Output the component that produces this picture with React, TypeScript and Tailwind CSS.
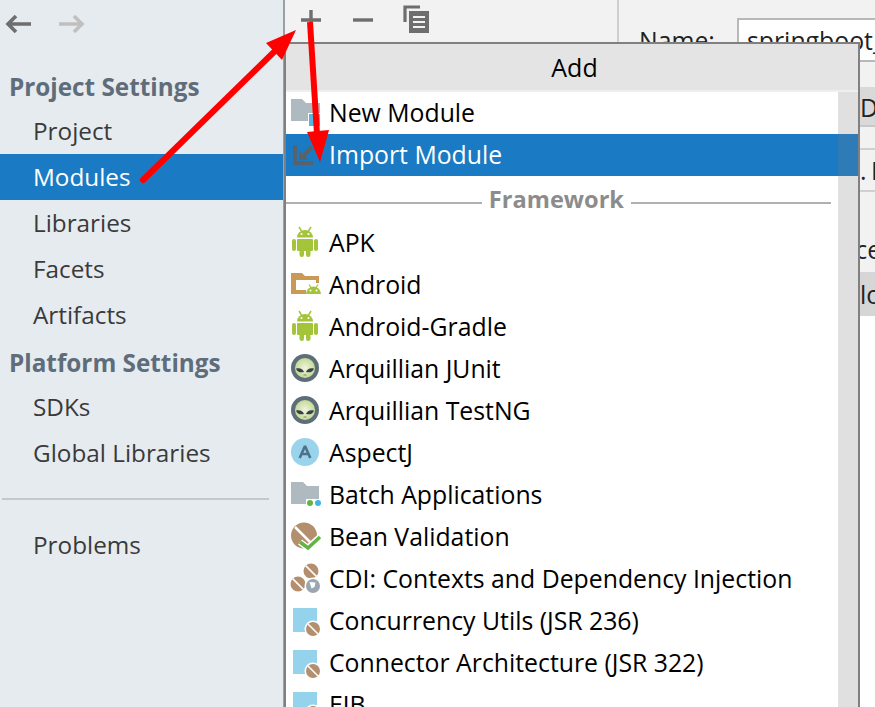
const font = "font-['Open_Sans','Noto_Sans',sans-serif]";

function Icon({ children }: { children: React.ReactNode }) {
  return (
    <svg width="30" height="30" viewBox="0 0 30 30" className="shrink-0 overflow-visible">
      {children}
    </svg>
  );
}

function NewModuleIcon() {
  return (
    <Icon>
      <path d="M0 1h11l4 4h14v18H0z" fill="#aeb9c0" />
      <rect x="17" y="15" width="13" height="15" fill="#fff" />
      <rect x="18" y="16" width="11" height="12" fill="#56b5dc" />
    </Icon>
  );
}

function ImportIcon() {
  return (
    <Icon>
      <path d="M4 5v18h18.500" fill="none" stroke="#58626a" strokeWidth="4" />
      <path d="M11 17L21 7" stroke="#58626a" strokeWidth="4" />
      <path d="M8 10v10h10z" fill="#58626a" />
    </Icon>
  );
}

function AndroidIcon() {
  return (
    <Icon>
      <g fill="#a4c439">
        <path d="M6 9.500a8 7.500 0 0 1 16 0z" />
        <path d="M8 -1l2.500 4M20 -1l-2.500 4" stroke="#a4c439" strokeWidth="1.500" />
        <rect x="6" y="11" width="16" height="12" rx="1" />
        <rect x="1" y="11" width="4" height="12" rx="2" />
        <rect x="23" y="11" width="4" height="12" rx="2" />
        <rect x="8.500" y="20" width="4.500" height="9" rx="2.200" />
        <rect x="15" y="20" width="4.500" height="9" rx="2.200" />
      </g>
      <circle cx="10.500" cy="6" r="1.100" fill="#fff" />
      <circle cx="17.500" cy="6" r="1.100" fill="#fff" />
    </Icon>
  );
}

function AndroidFolderIcon() {
  return (
    <Icon>
      <path d="M0 3h11l3 3h14v7h-3v-3H5v10h10v4H0z" fill="#c99a55" />
      <path d="M15 24a7.500 7.500 0 0 1 15 0z" fill="#a4c439" />
      <path d="M18 14.500l2 3M27 14.500l-2 3" stroke="#a4c439" strokeWidth="1.200" />
      <circle cx="19.500" cy="20.500" r="1" fill="#fff" />
      <circle cx="25.500" cy="20.500" r="1" fill="#fff" />
    </Icon>
  );
}

function AlienIcon() {
  return (
    <Icon>
      <defs>
        <radialGradient id="alienFace">
          <stop offset="0%" stopColor="#f0f5e0" />
          <stop offset="100%" stopColor="#c5d996" />
        </radialGradient>
      </defs>
      <circle cx="14" cy="14" r="14" fill="#5c6f78" />
      <circle cx="14" cy="14" r="10" fill="url(#alienFace)" />
      <path d="M5 14.500c3.500-1 7 0 8 3.500-3.500 1-7 0-8-3.500zM23 14.500c-3.500-1-7 0-8 3.500 3.500 1 7 0 8-3.500z" fill="#37434a" />
      <path d="M12.500 21h3" stroke="#7d8a70" strokeWidth="1" />
    </Icon>
  );
}

function AspectIcon() {
  return (
    <Icon>
      <circle cx="14" cy="14" r="14" fill="#99d4ec" />
      <path d="M8.700 20L14 8 19.300 20M10.500 16h7" fill="none" stroke="#4d7189" strokeWidth="2.600" strokeLinejoin="bevel" />
    </Icon>
  );
}

function BatchIcon() {
  return (
    <Icon>
      <path d="M0 2h12l4 4h12v13h-13v5H0z" fill="#aeb9c0" />
      <circle cx="19" cy="23" r="3" fill="#62b543" />
      <circle cx="27" cy="23" r="3" fill="#40b6e0" />
    </Icon>
  );
}

function Bean({ cx, cy, r }: { cx: number; cy: number; r: number }) {
  const d = r * 0.72;
  return (
    <g>
      <circle cx={cx} cy={cy} r={r} fill="#b48f6e" />
      <path d={`M${cx - d} ${cy - d}L${cx + d} ${cy + d}`} stroke="#fff" strokeWidth="1.600" />
    </g>
  );
}

function BeanValidationIcon() {
  return (
    <Icon>
      <circle cx="13" cy="13.500" r="13" fill="#b48f6e" />
      <path d="M4 5l17 17" stroke="#fff" strokeWidth="2.500" />
      <path d="M9 20l8 6 12-11" fill="none" stroke="#fff" strokeWidth="6.500" />
      <path d="M9 20l8 6 12-11" fill="none" stroke="#62b543" strokeWidth="3.600" />
    </Icon>
  );
}

function CdiIcon() {
  return (
    <Icon>
      <Bean cx={7} cy={20} r={7.500} />
      <Bean cx={20} cy={7} r={7.500} />
      <circle cx="22" cy="22" r="8.500" fill="#fff" />
      <circle cx="22" cy="22" r="7" fill="#9aa7b0" />
      <path d="M18.500 18l6 .5-1 4.500-3 1.500z" fill="#fff" />
    </Icon>
  );
}

function SquareBeanIcon() {
  return (
    <Icon>
      <rect x="2" y="2" width="24" height="24" fill="#95d3ec" />
      <circle cx="22" cy="23" r="8.500" fill="#fff" />
      <Bean cx={22} cy={23} r={7} />
    </Icon>
  );
}

const groups = [
  { title: "Project Settings", items: ["Project", "Modules", "Libraries", "Facets", "Artifacts"] },
  { title: "Platform Settings", items: ["SDKs", "Global Libraries"] },
];

const rows: { label: string; icon: React.ReactNode }[] = [
  { label: "APK", icon: <AndroidIcon /> },
  { label: "Android", icon: <AndroidFolderIcon /> },
  { label: "Android-Gradle", icon: <AndroidIcon /> },
  { label: "Arquillian JUnit", icon: <AlienIcon /> },
  { label: "Arquillian TestNG", icon: <AlienIcon /> },
  { label: "AspectJ", icon: <AspectIcon /> },
  { label: "Batch Applications", icon: <BatchIcon /> },
  { label: "Bean Validation", icon: <BeanValidationIcon /> },
  { label: "CDI: Contexts and Dependency Injection", icon: <CdiIcon /> },
  { label: "Concurrency Utils (JSR 236)", icon: <SquareBeanIcon /> },
  { label: "Connector Architecture (JSR 322)", icon: <SquareBeanIcon /> },
  { label: "EJB", icon: <SquareBeanIcon /> },
];

function Sidebar() {
  return (
    <aside className="w-[283px] shrink-0 bg-[#e6ebf0] flex flex-col">
      <div className="h-[66px] shrink-0 flex items-start pt-[14px] pl-[5px] gap-[28px]">
        <svg width="26" height="20" viewBox="0 0 26 20">
          <path d="M26 10H3M11 2l-8 8 8 8" fill="none" stroke="#6e6e6e" strokeWidth="3.600" />
        </svg>
        <svg width="26" height="20" viewBox="0 0 26 20">
          <path d="M0 10h23M15 2l8 8-8 8" fill="none" stroke="#c0c0c0" strokeWidth="3.600" />
        </svg>
      </div>
      {groups.map((g) => (
        <div key={g.title} className="mb-[4px]">
          <div className="h-[42px] leading-[42px] pl-[9px] text-[24.300px] font-bold text-[#5f6d7a]">
            {g.title}
          </div>
          {g.items.map((item) => (
            <div
              key={item}
              className={
                item === "Modules"
                  ? "h-[46px] leading-[46px] pl-[33px] text-[24.300px] bg-[#1a7ac3] text-white"
                  : "h-[46px] leading-[46px] pl-[33px] text-[24.300px] text-[#3a3a3a]"
              }
            >
              {item}
            </div>
          ))}
        </div>
      ))}
      <div className="h-[2px] shrink-0 bg-[#c4c8cc] ml-[2px] mr-[14px] mt-[18px] mb-[22px]" />
      <div className="h-[46px] leading-[46px] pl-[33px] text-[24.300px] text-[#3a3a3a]">Problems</div>
    </aside>
  );
}

function Toolbar() {
  return (
    <div className="w-[334px] shrink-0 border-r-2 border-[#cfcfcf] h-full">
      <div className="flex items-start">
        <svg width="24" height="24" viewBox="0 0 24 24" className="ml-[14px] mt-[7px]">
          <path d="M2 13h20M12 3v20" stroke="#6e6e6e" strokeWidth="3.400" />
        </svg>
        <svg width="24" height="24" viewBox="0 0 24 24" className="ml-[28px] mt-[7px]">
          <path d="M2 13h20" stroke="#6e6e6e" strokeWidth="3.400" />
        </svg>
        <svg width="26" height="28" viewBox="0 0 26 28" className="ml-[28px] mt-[5px]">
          <path d="M2 17V2h15" fill="none" stroke="#6e6e6e" strokeWidth="3.200" />
          <rect x="6" y="6" width="20" height="22" fill="#6e6e6e" />
          <path d="M10 12h12M10 17h12M10 22h12" stroke="#f2f2f2" strokeWidth="2" />
        </svg>
      </div>
    </div>
  );
}

function DetailPanel() {
  return (
    <div className="flex-1 min-w-0 overflow-hidden text-[24.800px] text-[#222]">
      <div className="h-[87px] pt-[18px] flex items-start">
        <span className="ml-[20px] w-[98px] shrink-0 leading-[44px]">Name:</span>
        <div className="border-2 border-[#b8b8b8] bg-white h-[44px] pl-[8px] leading-[40px] w-[400px] shrink-0 whitespace-nowrap">
          springboot_
        </div>
      </div>
      <div className="h-[40px] leading-[40px] pl-[241px] bg-[#d9d9d9] border-b-2 border-[#c8c8c8]">D</div>
      <div className="h-[23px] border-b-2 border-[#d0d0d0]" />
      <div className="h-[42px] leading-[40px] pl-[241px] border-b-2 border-[#d0d0d0] whitespace-nowrap tracking-[-1px]">. I</div>
      <div className="h-[80px] leading-[114px] pl-[196px] whitespace-nowrap">ource</div>
      <div className="h-[44px] leading-[44px] pl-[241px] bg-[#d6d6d6] whitespace-nowrap">lo</div>
      <div className="h-[391px] bg-white" />
    </div>
  );
}

function AddPopup() {
  return (
    <div className="absolute left-[284px] top-[42px] w-[576px] h-[665px] bg-white border-t-2 border-x-2 border-[#808080] overflow-hidden flex flex-col">
      <div className="h-[46px] shrink-0 bg-[#e4e4e4] text-center pl-[5px] leading-[46px] text-[25px] text-black">Add</div>
      <div className="h-[2px] shrink-0 bg-[#efefef]" />
      <div className="relative flex-1">
        <div className="absolute right-0 top-0 bottom-0 w-[20px] bg-[#e0e0e0]" />
        <div className="relative h-[42px] flex items-center pl-[5px] gap-[8px] text-[24.800px] text-black">
          <NewModuleIcon />
          New Module
        </div>
        <div className="relative h-[42px] flex items-center pl-[5px] gap-[8px] text-[24.800px] bg-[#1a7ac3] text-white">
          <ImportIcon />
          Import Module
          <div className="absolute right-0 top-0 bottom-0 w-[20px] bg-[#2e7bb8]" />
        </div>
        <div className="h-[46px] flex items-center pr-[27px] gap-[7px]">
          <div className="h-[2px] bg-[#b0b0b0] flex-1 mt-[7px]" />
          <span className="text-[23.600px] font-bold text-[#8c8c8c] leading-none mt-[1px]">Framework</span>
          <div className="h-[2px] bg-[#b0b0b0] w-[200px] mt-[7px]" />
        </div>
        {rows.map((r) => (
          <div key={r.label} className="relative h-[42px] flex items-center pl-[5px] gap-[8px] text-[24.800px] text-black whitespace-nowrap">
            {r.icon}
            {r.label}
          </div>
        ))}
      </div>
    </div>
  );
}

function Arrows() {
  return (
    <svg width="875" height="707" viewBox="0 0 875 707" className="absolute left-0 top-0 pointer-events-none">
      <path d="M143 180L276 50" stroke="#ff0000" strokeWidth="6" strokeLinecap="round" />
      <path d="M296 30L266 43L282 60z" fill="#ff0000" />
      <path d="M310 22L317 134" stroke="#ff0000" strokeWidth="6" />
      <path d="M320 162L307 132L329 130z" fill="#ff0000" />
    </svg>
  );
}

export default function App() {
  return (
    <div className={`relative w-[875px] h-[707px] overflow-hidden flex bg-[#f2f2f2] ${font}`}>
      <Sidebar />
      <div className="w-[2px] shrink-0 bg-[#9aa0a6]" />
      <Toolbar />
      <DetailPanel />
      <AddPopup />
      <Arrows />
    </div>
  );
}
